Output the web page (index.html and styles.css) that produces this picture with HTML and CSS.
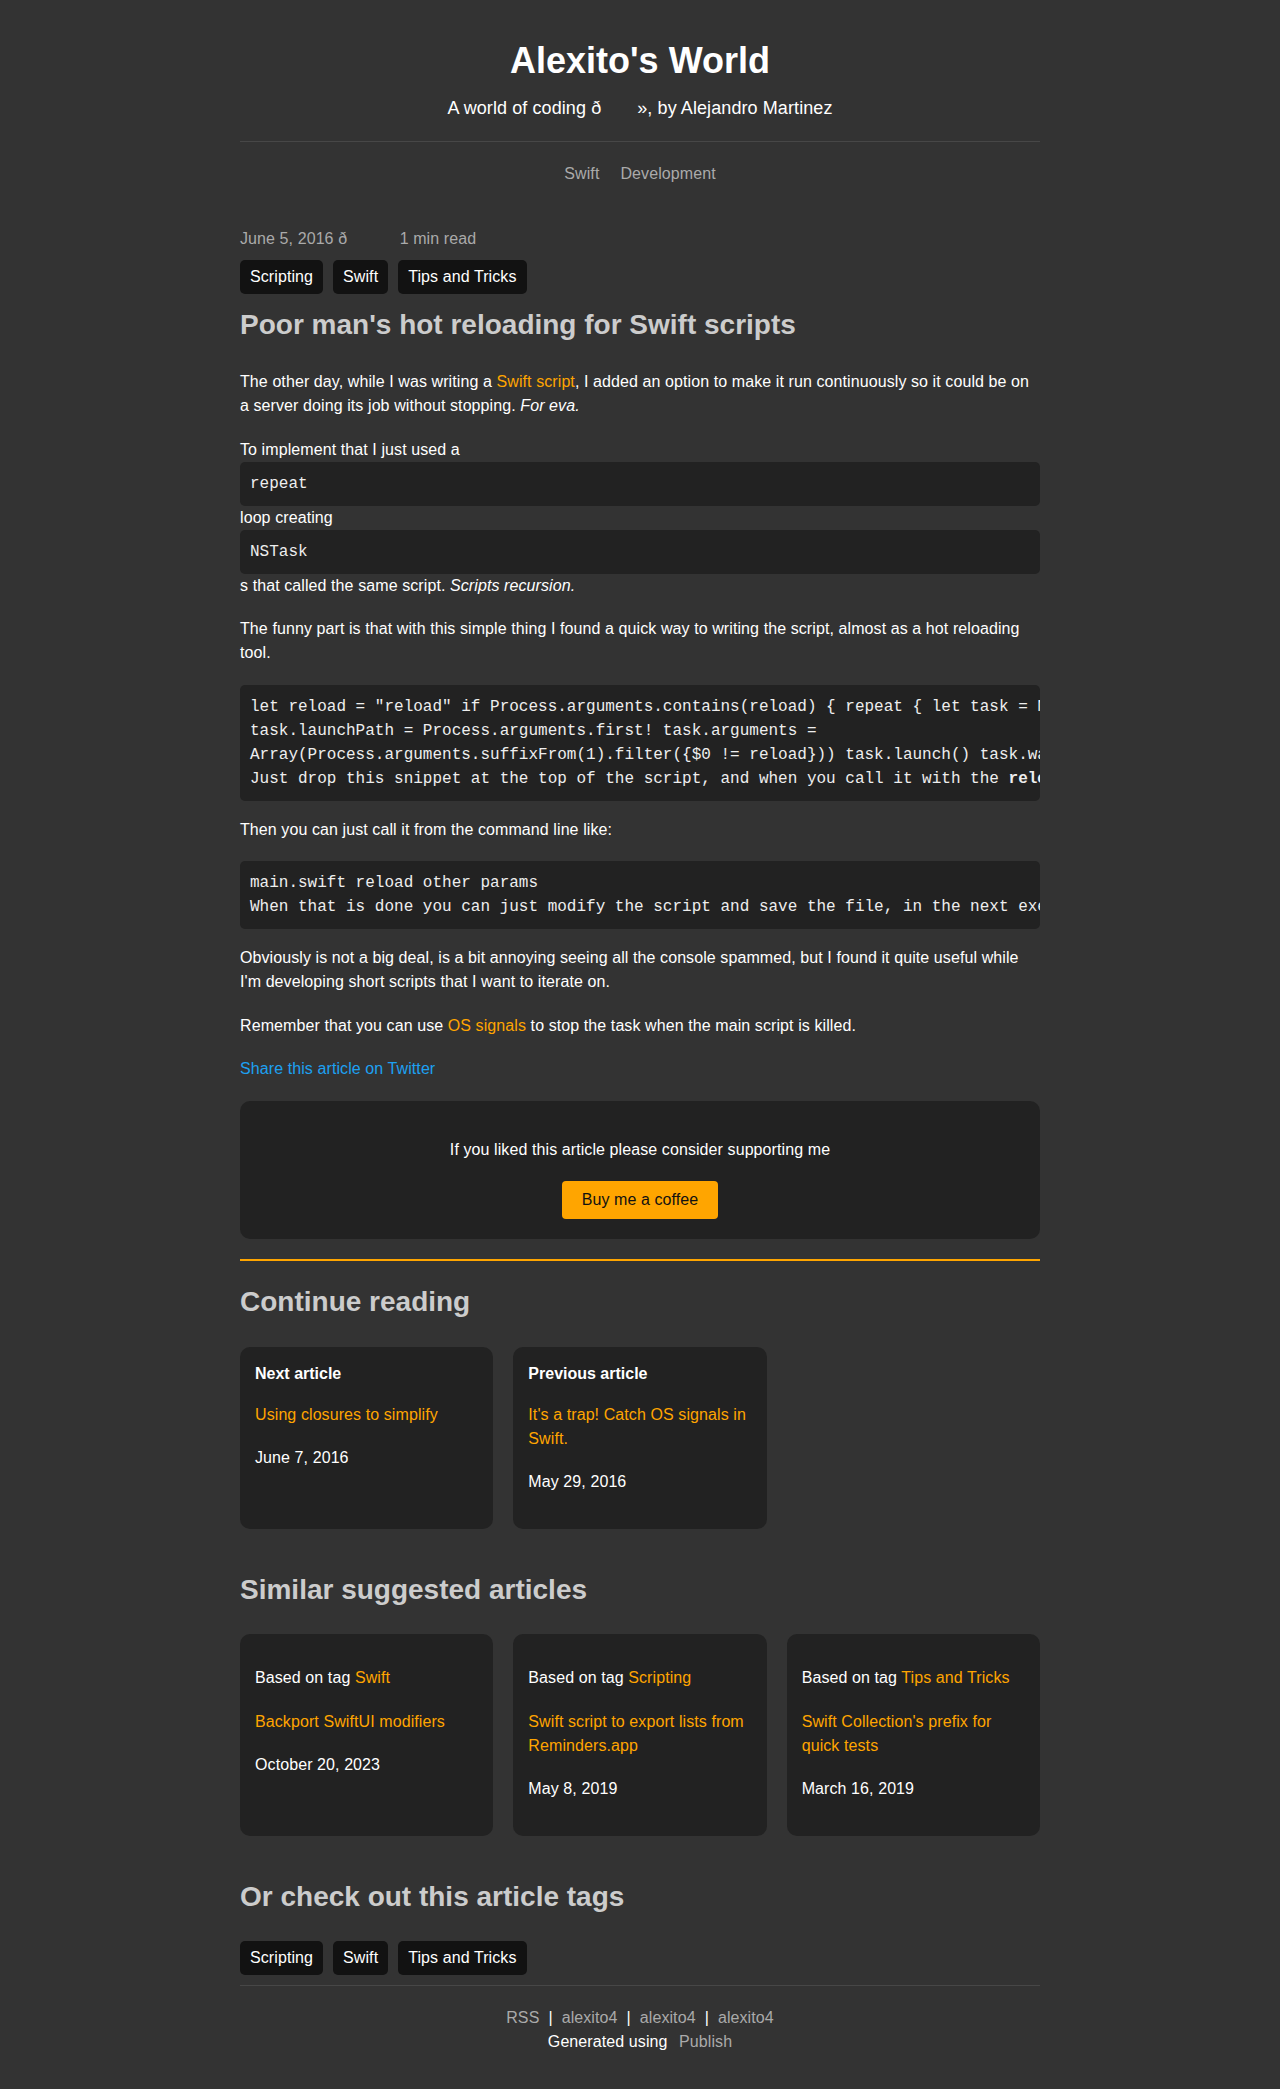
FILE: index.html
```html
<!DOCTYPE html>
<html lang="en">
<head>
<meta charset="utf-8">
<title>Poor man's hot reloading for Swift scripts | Alexito's World</title>
<link rel="stylesheet" href="styles.css">
</head>
<body>
<div class="wrapper">
  <header class="site-header">
    <h1 class="site-title">Alexito's World</h1>
    <p class="site-subtitle">A world of coding ð<span class="glitch glitch-2"></span>», by Alejandro Martinez</p>
    <hr class="rule">
    <nav class="site-nav">
      <a href="#">Swift</a>
      <a href="#">Development</a>
    </nav>
  </header>

  <main>
    <article class="post">
      <div class="post-meta">June 5, 2016 ð<span class="glitch glitch-3"></span> 1 min read</div>
      <ul class="tag-list">
        <li><a href="#">Scripting</a></li>
        <li><a href="#">Swift</a></li>
        <li><a href="#">Tips and Tricks</a></li>
      </ul>
      <h2 class="post-title">Poor man's hot reloading for Swift scripts</h2>

      <div class="content">
        <p>The other day, while I was writing a <a class="accent" href="#">Swift script</a>, I added an option to make it run continuously so it could be on a server doing its job without stopping. <em>For eva.</em></p>
        <p>To implement that I just used a <code class="code-block">repeat</code>loop creating <code class="code-block">NSTask</code>s that called the same script. <em>Scripts recursion.</em></p>
        <p>The funny part is that with this simple thing I found a quick way to writing the script, almost as a hot reloading tool.</p>
<pre class="code">let reload = "reload" if Process.arguments.contains(reload) { repeat { let task = NSTask()
task.launchPath = Process.arguments.first! task.arguments =
Array(Process.arguments.suffixFrom(1).filter({$0 != reload})) task.launch() task.waitUntilExit() } }
Just drop this snippet at the top of the script, and when you call it with the <strong>reload</strong> argument it will keep running.</pre>
        <p>Then you can just call it from the command line like:</p>
<pre class="code">main.swift reload other params
When that is done you can just modify the script and save the file, in the next execution the changes will be there.</pre>
        <p>Obviously is not a big deal, is a bit annoying seeing all the console spammed, but I found it quite useful while I'm developing short scripts that I want to iterate on.</p>
        <p>Remember that you can use <a class="accent" href="#">OS signals</a> to stop the task when the main script is killed.</p>
        <p><a class="share" href="#">Share this article on Twitter</a></p>
      </div>

      <div class="support">
        <p>If you liked this article please consider supporting me</p>
        <a class="coffee" href="#">Buy me a coffee</a>
      </div>
    </article>

    <hr class="accent-rule">

    <section class="related">
      <h2 class="section-title">Continue reading</h2>
      <div class="card-grid">
        <div class="card">
          <strong class="card-label">Next article</strong>
          <p><a class="accent" href="#">Using closures to simplify</a></p>
          <p>June 7, 2016</p>
        </div>
        <div class="card">
          <strong class="card-label">Previous article</strong>
          <p><a class="accent" href="#">It's a trap! Catch OS signals in Swift.</a></p>
          <p>May 29, 2016</p>
        </div>
      </div>
    </section>

    <section class="related">
      <h2 class="section-title section-title-spaced">Similar suggested articles</h2>
      <div class="card-grid">
        <div class="card">
          <p>Based on tag <a class="accent" href="#">Swift</a></p>
          <p><a class="accent" href="#">Backport SwiftUI modifiers</a></p>
          <p>October 20, 2023</p>
        </div>
        <div class="card">
          <p>Based on tag <a class="accent" href="#">Scripting</a></p>
          <p><a class="accent" href="#">Swift script to export lists from Reminders.app</a></p>
          <p>May 8, 2019</p>
        </div>
        <div class="card">
          <p>Based on tag <a class="accent" href="#">Tips and Tricks</a></p>
          <p><a class="accent" href="#">Swift Collection's prefix for quick tests</a></p>
          <p>March 16, 2019</p>
        </div>
      </div>
    </section>

    <section class="related">
      <h2 class="section-title section-title-spaced">Or check out this article tags</h2>
      <ul class="tag-list tag-list-flat">
        <li><a href="#">Scripting</a></li>
        <li><a href="#">Swift</a></li>
        <li><a href="#">Tips and Tricks</a></li>
      </ul>
    </section>
  </main>

  <footer class="site-footer">
    <hr class="rule footer-rule">
    <div class="footer-links">
      <a href="#">RSS</a><span class="sep">|</span><a href="#">alexito4</a><span class="sep">|</span><a href="#">alexito4</a><span class="sep">|</span><a href="#">alexito4</a>
    </div>
    <div class="footer-credit">Generated using <a href="#">Publish</a></div>
  </footer>
</div>
</body>
</html>
```

FILE: styles.css
```css
html, body {
  margin: 0;
  padding: 0;
}

body {
  background: #333333;
  color: #ffffff;
  font-family: "Liberation Sans", Arial, Helvetica, sans-serif;
  font-size: 16px;
  line-height: 24px;
  letter-spacing: 0.09px;
}

a {
  text-decoration: none;
  color: inherit;
}

.wrapper {
  width: 800px;
  margin: 0 auto;
  padding: 41px 0 35px;
}

/* Header */
.site-header {
  text-align: center;
}

.site-title {
  margin: 0;
  font-size: 36px;
  line-height: 40px;
  font-weight: bold;
  color: #ffffff;
  letter-spacing: 0;
}

.site-subtitle {
  margin: 15px 0 0;
  font-size: 18px;
  line-height: 24px;
}

.glitch {
  display: inline-block;
  height: 1px;
}

.glitch-2 {
  width: 2em;
}

.glitch-3 {
  width: 3em;
}

.rule {
  border: 0;
  border-top: 1px solid #474747;
  height: 0;
  margin: 21px 0 20px;
}

.site-nav {
  display: flex;
  justify-content: center;
  gap: 21px;
}

.site-nav a {
  color: #aaaaaa;
}

/* Post */
.post-meta {
  margin-top: 41px;
  color: #aaaaaa;
}

.tag-list {
  list-style: none;
  margin: 9px 0 0;
  padding: 0;
  display: flex;
  gap: 10px;
}

.tag-list a {
  display: block;
  background: #121212;
  color: #ffffff;
  border-radius: 5px;
  padding: 5px 10px;
  line-height: 24px;
}

.post-title {
  margin: 14px 0 28px;
  font-size: 28px;
  line-height: 34px;
  font-weight: bold;
  color: #cccccc;
  letter-spacing: 0;
}

.content p,
.support p,
.card p {
  margin: 17px 0 19.5px;
}

.content p:first-child {
  margin-top: 0;
}

.accent {
  color: #ffa500;
}

.share {
  color: #1da1f2;
}

.code-block {
  display: block;
  background: #222222;
  border-radius: 5px;
  padding: 10px;
  font-family: "Liberation Mono", "Courier New", monospace;
  font-size: 16px;
  line-height: 24px;
  letter-spacing: 0;
  color: #eeeeee;
}

.code {
  margin: 0;
  background: #222222;
  border-radius: 5px;
  padding: 10px;
  font-family: "Liberation Mono", "Courier New", monospace;
  font-size: 16px;
  line-height: 24px;
  letter-spacing: 0;
  color: #eeeeee;
  white-space: pre;
  overflow: hidden;
}

/* Support box */
.support {
  margin-top: 19.5px;
  background: #222222;
  border-radius: 10px;
  padding: 20px;
  text-align: center;
}

.coffee {
  display: inline-block;
  background: #ffa500;
  color: #111111;
  border-radius: 4px;
  padding: 7px 20px;
  line-height: 24px;
}

.accent-rule {
  border: 0;
  height: 2px;
  background: #ffa500;
  margin: 20px 0 0;
}

/* Related sections */
.section-title {
  margin: 24px 0 27.5px;
  font-size: 28px;
  line-height: 34px;
  font-weight: bold;
  color: #cccccc;
  letter-spacing: 0;
}

.section-title-spaced {
  margin-top: 43.5px;
}

.card-grid {
  display: grid;
  grid-template-columns: repeat(3, 1fr);
  gap: 20px;
}

.card {
  background: #222222;
  border-radius: 10px;
  padding: 15px 15px 35px;
}

.card-label {
  display: block;
  font-weight: bold;
  letter-spacing: 0;
}

.card p:last-child {
  margin-bottom: 0;
}

.tag-list-flat {
  margin-top: 0;
}

/* Footer */
.footer-rule {
  margin: 10px 0 20px;
}

.site-footer {
  text-align: center;
}

.footer-links a,
.footer-credit a {
  color: #aaaaaa;
}

.sep {
  margin: 0 9px;
  color: #ffffff;
}

.footer-credit a {
  margin-left: 7px;
}
```
